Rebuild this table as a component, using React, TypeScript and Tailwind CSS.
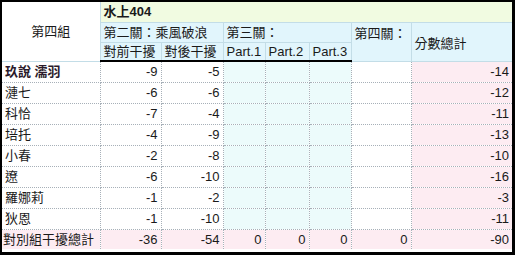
import React from 'react';

type Row = { name: string; a: number; b: number; total: number; bold?: boolean };

const rows: Row[] = [
  { name: '玖說 濡羽', a: -9, b: -5, total: -14, bold: true },
  { name: '漣七', a: -6, b: -6, total: -12 },
  { name: '科恰', a: -7, b: -4, total: -11 },
  { name: '培托', a: -4, b: -9, total: -13 },
  { name: '小春', a: -2, b: -8, total: -10 },
  { name: '遼', a: -6, b: -10, total: -16 },
  { name: '羅娜莉', a: -1, b: -2, total: -3 },
  { name: '狄恩', a: -1, b: -10, total: -11 },
];

const hd = 'border border-[#c3dde7] px-[3px] py-0 whitespace-nowrap overflow-hidden';
const cell = 'border border-dotted border-[#a7b0b8] px-[3px] py-0 whitespace-nowrap overflow-hidden';

const App: React.FC = () => {
  return (
    <div
      className="w-[515px] h-[255px] border-t-2 border-l-2 border-r-[3px] border-b-[3px] border-black bg-white text-[#1a1a1a] text-[13px] leading-none overflow-hidden"
      style={{ fontFamily: '"Liberation Sans", "Noto Sans CJK TC", sans-serif' }}
    >
      <table className="table-fixed border-collapse w-[510px] border-hidden">
        <colgroup>
          <col className="w-[98px]" />
          <col className="w-[61px]" />
          <col className="w-[62px]" />
          <col className="w-[42px]" />
          <col className="w-[44px]" />
          <col className="w-[42px]" />
          <col className="w-[60px]" />
          <col className="w-[101px]" />
        </colgroup>
        <thead>
          <tr className="h-[20px]">
            <th rowSpan={3} className={`${hd} font-normal bg-white text-center`}>第四組</th>
            <th colSpan={7} className={`${hd} font-bold bg-[#f1fbe1] text-left`}>水上404</th>
          </tr>
          <tr className="h-[20px]">
            <th colSpan={2} className={`${hd} font-normal bg-[#e1f5fc] text-left`}>第二關：乘風破浪</th>
            <th colSpan={3} className={`${hd} font-normal bg-[#e1f5fc] text-left`}>第三關：</th>
            <th rowSpan={2} className={`${hd} font-normal bg-[#e1f5fc] text-left align-top pt-[4px]`}>第四關：</th>
            <th rowSpan={2} className={`${hd} font-normal bg-[#e1f5fc] text-left pt-[4px]`}>分數總計</th>
          </tr>
          <tr className="h-[19px]">
            <th className={`${hd} font-normal bg-[#e1f5fc] text-left border-b-2 border-b-black`}>對前干擾</th>
            <th className={`${hd} font-normal bg-[#e1f5fc] text-left border-b-2 border-b-black`}>對後干擾</th>
            <th className={`${hd} font-normal bg-[#e1f5fc] text-left border-b-2 border-b-black`}>Part.1</th>
            <th className={`${hd} font-normal bg-[#e1f5fc] text-left border-b-2 border-b-black`}>Part.2</th>
            <th className={`${hd} font-normal bg-[#e1f5fc] text-left border-b-2 border-b-black`}>Part.3</th>
          </tr>
        </thead>
        <tbody>
          {rows.map((r) => (
            <tr key={r.name} className="h-[21px]">
              <td className={`${cell} text-left ${r.bold ? 'font-bold text-[#2b1b2b]' : ''}`}>{r.name}</td>
              <td className={`${cell} text-right`}>{r.a}</td>
              <td className={`${cell} text-right`}>{r.b}</td>
              <td className={`${cell} bg-[#ecfbfb]`}></td>
              <td className={`${cell} bg-[#ecfbfb]`}></td>
              <td className={`${cell} bg-[#ecfbfb]`}></td>
              <td className={`${cell} bg-white`}></td>
              <td className={`${cell} bg-[#fdecf2] text-right`}>{r.total}</td>
            </tr>
          ))}
          <tr className="h-[20px] bg-[#fdecf2]">
            <td className={`${cell} text-left pl-[1px]`}>對別組干擾總計</td>
            <td className={`${cell} text-right`}>-36</td>
            <td className={`${cell} text-right`}>-54</td>
            <td className={`${cell} text-right`}>0</td>
            <td className={`${cell} text-right`}>0</td>
            <td className={`${cell} text-right`}>0</td>
            <td className={`${cell} text-right`}>0</td>
            <td className={`${cell} text-right`}>-90</td>
          </tr>
        </tbody>
      </table>
    </div>
  );
};

export default App;
